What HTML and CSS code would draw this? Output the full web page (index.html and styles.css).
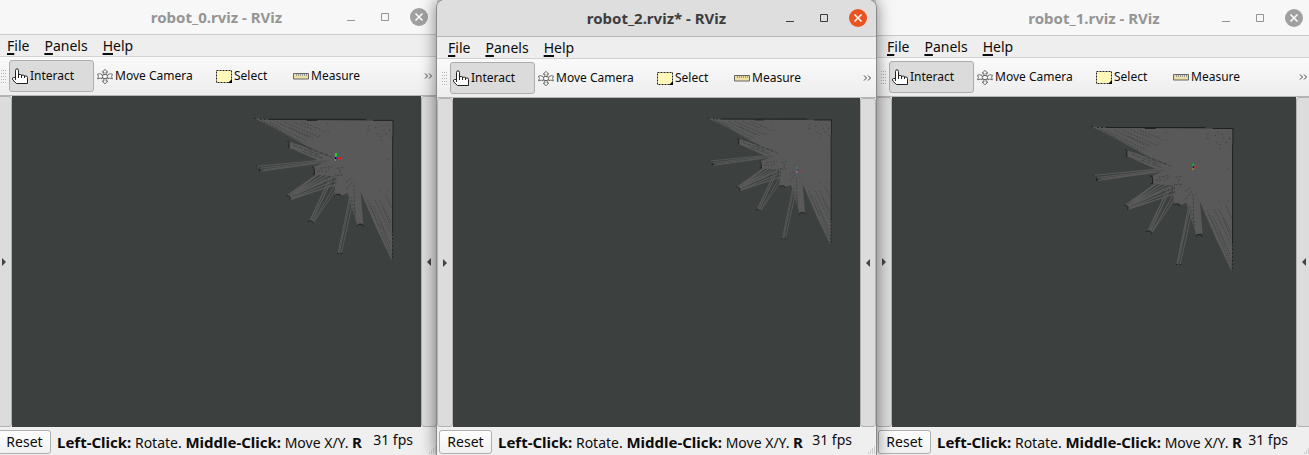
FILE: index.html
```html
<!DOCTYPE html>
<html lang="en">
<head>
<meta charset="utf-8">
<title>RViz</title>
<link rel="stylesheet" href="styles.css">
</head>
<body>
<svg class="defs" aria-hidden="true">
  <symbol id="hand" viewBox="0 0 16 17"><path d="M3.500 9.500V2.500Q3.500 .8 5 .8Q6.500 .8 6.500 2.500V6.500H8.500Q9.500 6.500 9.500 7.200H11.500Q12.500 7.200 12.500 8H14Q15.500 8 15.500 9.500V15.500H4.500L.8 12Q-.2 9.500 1.500 9.500Z" fill="#fff" stroke="#222"/><path d="M3.500 9V12M6.500 6V10M9.500 7V10M12.500 8V10" stroke="#222"/></symbol>
  <symbol id="move" viewBox="0 0 17 17"><g fill="#fafafa" stroke="#555" stroke-width=".9"><path d="M8.500 1L11.500 3.800H9.700V6.500H7.300V3.800H5.500ZM8.500 16.200L11.500 13.400H9.700V10.500H7.300V13.400H5.500ZM.6 6L3 5.500L5.500 6.500V7.500H8V9.500H5.500V11L3.500 10.200L.6 11L1.500 8.500ZM16.400 6L14 5.500L11.500 6.500V7.500H9V9.500H11.500V11L13.500 10.200L16.400 11L15.500 8.500Z"/><ellipse cx="8.500" cy="8.500" rx="2.800" ry="2.300"/></g></symbol>
  <symbol id="select" viewBox="0 0 16 13"><path d="M.5 .5H15.500V12.500H.5Z" fill="#fff8b8" stroke="#222" stroke-dasharray="2 1"/><path d="M16 9V13H12Z"/></symbol>
  <symbol id="ruler" viewBox="0 0 16 7"><path d="M.5 .5H15.500V6H.5Z" fill="#eee0a4" stroke="#666"/><path d="M3.500 1V3M5.500 1V3M7.500 1V3M9.500 1V3M11.500 1V3M13.500 1V3" stroke="#999"/></symbol>
  <symbol id="min" viewBox="0 0 10 10"><path d="M1 8.500H9" stroke="currentColor"/></symbol>
  <symbol id="max" viewBox="0 0 10 10"><path d="M1.500 1.500H8.500V8.500H1.500Z" fill="none" stroke="currentColor"/></symbol>
  <symbol id="close" viewBox="0 0 10 10"><path d="M1.500 1.500L8.500 8.500M8.500 1.500L1.500 8.500" stroke="#fff" stroke-width="1.500"/></symbol>
  <symbol id="more" viewBox="0 0 9 8"><path d="M1 1.500L3.500 4L1 6.500M5 1.500L7.500 4L5 6.500" fill="none" stroke="#444" stroke-width="1"/></symbol>
  <symbol id="grip" viewBox="0 0 9 9"><path d="M7 1H8M5 3H6M7 3H8M3 5H4M5 5H6M7 5H8M1 7H2M3 7H4M5 7H6M7 7H8" stroke="#aaa"/></symbol>
  <symbol id="map" viewBox="30 30 441 450">
    <g fill="#595959">
      <path d="M43 40L100 45L459 47L457 400L455 466L410 372L362 262L345 228L300 195L275 165L250 148L190 118L115 76Z"/>
      <path d="M148 110L270 150L280 168L232 165L148 128Z"/>
      <path d="M218 187L285 158L348 228L328 262L305 272Q295 262 286 272L283 215L245 210L224 210Q227 199 218 187Z"/>
      <path d="M352 362L322 262L343 222L362 262L370 358Q360 350 352 362Z"/>
    </g>
    <g fill="none" stroke="#595959" stroke-width="3">
      <path d="M50 184L280 162M58 190L280 165M62 199L260 171M70 194L230 174"/>
      <path d="M142 272L240 203M146 276L252 208M150 284L290 237M152 276L275 215M152 281L285 227M151 272L235 208M165 266L270 208M165 270L280 218" stroke-width="4"/>
      <path d="M208 350L270 218M213 352L278 218M219 355L290 250M221 349L287 236M217 348L268 240M212 345L262 236"/>
      <path d="M294 446L330 270M298 443L333 276M304 446L338 292"/>
    </g>
    <g fill="none" stroke="#3c403f" stroke-width="2.500">
      <path d="M72 51L188 112M90 52L202 109M112 52L205 97M133 51L240 98M160 51L220 74M65 47L115 72M185 51L245 75M150 68L218 98" stroke-dasharray="5 4"/>
      <path d="M390 300L453 450M400 303L453 420M405 285L454 388M418 285L454 353M382 286L420 368M430 310L454 370M420 350L452 437M437 269L455 310" stroke-dasharray="4 4"/>
      <path d="M385 62V65M382 75H388M405 67H409M410 88H414M425 62H429M430 74H434M441 61H444M449 72V79M436 87H442M420 94H424M445 162V165M421 105H424M249 80H252M263 79H266M445 257V260M416 260H419M237 92H241M260 57H263M413 57H416M449 98H452"/>
      <path d="M160 121L240 151M190 123L263 150M188 139L250 161M205 132L278 157" stroke-dasharray="13 4"/>
      <path d="M240 190L274 184M232 198H249M255 202L275 187M290 190L310 187M300 194V208M287 208V236M290 211H310M318 232L335 219M320 253L337 230M342 240L345 350M332 275L347 330M270 240L284 222M250 233L272 214" stroke-dasharray="7 4"/>
    </g>
    <g fill="none" stroke="#202222" stroke-width="3">
      <path d="M85 43H378M200 46H232M400 46H459V95M458 95V385"/>
      <path d="M42 40H47M60 43H80M458 388V466" stroke-dasharray="5 6"/>
      <path d="M142 109H145M147 110V127H143M48 183H51M58 190V198H62M216 187H221L223 195V208H218M139 272H144L150 277V286M204 350L213 347L221 356M285 272L289 268H300L304 275M291 446H296M302 446H307M351 365L355 358H365L370 364"/>
    </g>
  </symbol>
</svg>
<main class="desktop">
  <section class="window window-first">
    <header class="titlebar"><h1>robot_0.rviz - RViz</h1><div class="controls"><button aria-label="Minimize"><svg><use href="#min"/></svg></button><button aria-label="Maximize"><svg><use href="#max"/></svg></button><button class="close" aria-label="Close"><svg><use href="#close"/></svg></button></div></header>
    <nav class="menu"><button><u>F</u>ile</button><button><u>P</u>anels</button><button><u>H</u>elp</button></nav>
    <div class="toolbar"><span class="handle"></span><button class="tool interact active"><svg><use href="#hand"/></svg>Interact</button><button class="tool camera"><svg><use href="#move"/></svg>Move Camera</button><button class="tool select"><svg><use href="#select"/></svg>Select</button><button class="tool measure"><svg><use href="#ruler"/></svg>Measure</button><button class="more" aria-label="More"><svg><use href="#more"/></svg></button></div>
    <div class="workspace"><button class="dock right" aria-label="Show left panel"></button><div class="view"><svg class="map map-first" viewBox="30 30 441 450"><use href="#map" x="30" y="30" width="441" height="450"/><path fill="#20d030" d="M285 144h6v13h-6z"/><path fill="#e02020" d="M291 156h12v7h-12z"/><path fill="#000" d="M285 157h4v5h-4z"/><path fill="#2020f0" d="M289 155h3v6h-3z"/><path fill="#80a050" d="M284 163h4v4h-4z"/></svg></div><button class="dock left" aria-label="Show right panel"></button></div>
    <footer class="status"><button class="reset">Reset</button><p><b>Left-Click:</b> Rotate. <b>Middle-Click:</b> Move X/Y. <b>R</b></p><span class="fps">31 fps</span><svg class="grip"><use href="#grip"/></svg></footer>
  </section>
  <section class="window window-active">
    <header class="titlebar"><h1>robot_2.rviz* - RViz</h1><div class="controls"><button aria-label="Minimize"><svg><use href="#min"/></svg></button><button aria-label="Maximize"><svg><use href="#max"/></svg></button><button class="close" aria-label="Close"><svg><use href="#close"/></svg></button></div></header>
    <nav class="menu"><button><u>F</u>ile</button><button><u>P</u>anels</button><button><u>H</u>elp</button></nav>
    <div class="toolbar"><span class="handle"></span><button class="tool interact active"><svg><use href="#hand"/></svg>Interact</button><button class="tool camera"><svg><use href="#move"/></svg>Move Camera</button><button class="tool select"><svg><use href="#select"/></svg>Select</button><button class="tool measure"><svg><use href="#ruler"/></svg>Measure</button><button class="more" aria-label="More"><svg><use href="#more"/></svg></button></div>
    <div class="workspace"><button class="dock right" aria-label="Show left panel"></button><div class="view"><svg class="map map-active" viewBox="30 30 441 450"><use href="#map" x="30" y="30" width="441" height="450"/><path fill="#409050" d="M341 204h4v8h-4z"/><path fill="#c02040" d="M348 215h7v5h-7z"/><path fill="#3030a0" d="M343 212h5v5h-5z"/><path fill="#7890a0" d="M341 217h4v8h-4z"/></svg></div><button class="dock left" aria-label="Show right panel"></button></div>
    <footer class="status"><button class="reset">Reset</button><p><b>Left-Click:</b> Rotate. <b>Middle-Click:</b> Move X/Y. <b>R</b></p><span class="fps">31 fps</span><svg class="grip"><use href="#grip"/></svg></footer>
  </section>
  <section class="window window-last">
    <header class="titlebar"><h1>robot_1.rviz - RViz</h1><div class="controls"><button aria-label="Minimize"><svg><use href="#min"/></svg></button><button aria-label="Maximize"><svg><use href="#max"/></svg></button><button class="close" aria-label="Close"><svg><use href="#close"/></svg></button></div></header>
    <nav class="menu"><button><u>F</u>ile</button><button><u>P</u>anels</button><button><u>H</u>elp</button></nav>
    <div class="toolbar"><span class="handle"></span><button class="tool interact active"><svg><use href="#hand"/></svg>Interact</button><button class="tool camera"><svg><use href="#move"/></svg>Move Camera</button><button class="tool select"><svg><use href="#select"/></svg>Select</button><button class="tool measure"><svg><use href="#ruler"/></svg>Measure</button><button class="more" aria-label="More"><svg><use href="#more"/></svg></button></div>
    <div class="workspace"><button class="dock right" aria-label="Show left panel"></button><div class="view"><svg class="map map-last" viewBox="30 30 441 450"><use href="#map" x="30" y="30" width="441" height="450"/><path fill="#30a030" d="M339 149h6v8h-6z"/><path fill="#a04040" d="M345 157h8v5h-8z"/><path fill="#101080" d="M341 157h4v5h-4z"/><path fill="#c07020" d="M339 163h6v5h-6z"/></svg></div><button class="dock left" aria-label="Show right panel"></button></div>
    <footer class="status"><button class="reset">Reset</button><p><b>Left-Click:</b> Rotate. <b>Middle-Click:</b> Move X/Y. <b>R</b></p><span class="fps">31 fps</span><svg class="grip"><use href="#grip"/></svg></footer>
  </section>
</main>
</body>
</html>
```
FILE: styles.css
```css
* { box-sizing: border-box; }
html, body { height: 100%; margin: 0; overflow: hidden; }
body { font: 14px/20px "Noto Sans", sans-serif; color: #0c0c0c; background: #f0f0f0; }
button { margin: 0; padding: 0; border: 0; background: none; font: inherit; color: inherit; }
svg { display: block; }
.defs { position: absolute; width: 0; height: 0; }
.desktop { display: grid; grid-template-columns: 441fr 439fr 436fr; height: 100%; margin: 0 -3px 0 -4px; background: #d8d8d8; }
.window { display: flex; flex-direction: column; min-width: 0; background: #efefef; }
.window-active { position: relative; z-index: 1; border-radius: 8px 8px 0 0; box-shadow: 0 0 0 1px #8a8a8a, 0 0 16px 1px #00000080; }

.titlebar { display: grid; grid-template-columns: 1fr auto 1fr; align-items: center; height: 35px; flex: none; border-bottom: 1px solid #c9c9c9; background: #f7f7f7; color: #959595; }
.titlebar h1 { grid-column: 2; margin: 0; font-size: 15px; line-height: 20px; font-weight: 700; white-space: nowrap; }
.window-active .titlebar { height: 37px; background: #dedede; color: #3d3d3d; border-bottom-color: #b8b8b8; border-radius: 8px 8px 0 0; }
.window-last .titlebar { height: 36px; }
.controls { display: flex; justify-content: flex-end; gap: 16px; padding-right: 9px; }
.controls button { display: grid; place-items: center; width: 18px; height: 18px; border-radius: 50%; }
.controls svg { width: 10px; height: 10px; }
.controls .close { background: #a0a0a0; }
.window-active .close { background: #e95420; }

.menu { display: flex; gap: 15px; height: 22px; flex: none; padding-left: 11px; border-bottom: 1px solid #d2d2d2; background: #eeeeee; }
.menu u { text-decoration-thickness: 2px; text-underline-offset: 2px; }

.toolbar { display: flex; align-items: center; height: 39px; flex: none; padding-left: 5px; border-bottom: 1px solid #b5b5b5; background: linear-gradient(#fafafa, #ededed); font-size: 12px; line-height: 16px; }
.handle { width: 5px; height: 17px; margin-right: 3px; background: repeating-linear-gradient(#f4f4f4 0 2px, transparent 2px 3px), repeating-linear-gradient(90deg, #b4b4b4 0 1px, transparent 1px 2px); }
.tool { display: flex; align-items: center; gap: 2px; height: 32px; padding-left: 3px; flex: none; white-space: nowrap; }
.tool svg { width: 16px; height: 17px; }
.active { border: 1px solid #adadad; border-radius: 3px; background: #dbdbdb; padding-left: 2px; }
.interact { width: 85px; }
.camera { width: 119px; }
.select { width: 77px; }
.more { margin-left: auto; padding-right: 4px; }
.more svg { width: 9px; height: 8px; }

.workspace { display: flex; flex: 1; min-height: 0; }
.dock { display: grid; place-items: center; width: 16px; flex: none; border: 1px solid #b2b2b2; border-radius: 3px; background: #dcdcdc; }
.dock::before { content: ""; border: 4px solid transparent; border-right: 0; border-left-color: #444; }
.dock.left::before { transform: rotate(180deg); }
.view { display: flex; justify-content: flex-end; align-items: flex-start; flex: 1; min-width: 0; background: #3c403f; overflow: hidden; }
.map { flex: none; }
.map-first { width: 147px; height: 150px; margin: 19px 24px 0 0; }
.map-active { width: 131px; height: 134px; margin: 17px 25px 0 0; }
.map-last { width: 150px; height: 153px; margin: 26px 59px 0 0; }

.status { display: flex; align-items: center; height: 28px; flex: none; padding-left: 2px; padding-top: 2px; }
.reset { width: 53px; height: 24px; flex: none; border: 1px solid #b0b0b0; border-radius: 3px; background: linear-gradient(#fefefe, #f1f1f1); line-height: 20px; }
.status p { flex: 1; min-width: 0; margin: 0 2px 0 6px; overflow: hidden; white-space: nowrap; }
.status b { font-size: 15px; }
.fps { flex: none; padding-bottom: 5px; }
.grip { width: 9px; height: 9px; flex: none; align-self: flex-end; margin-left: 15px; }
```
